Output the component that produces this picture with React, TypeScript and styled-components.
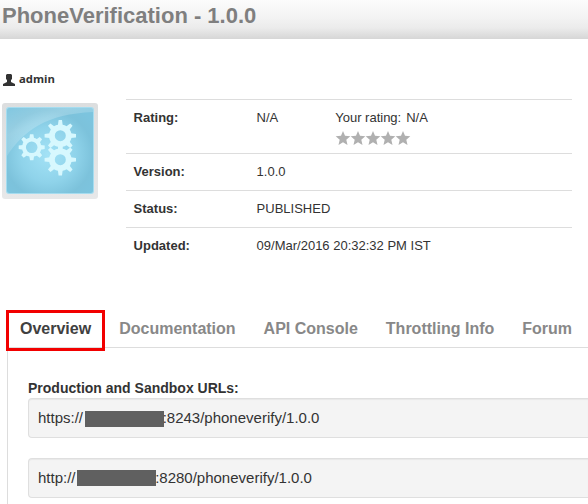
import React from 'react';
import styled, { createGlobalStyle } from 'styled-components';

const GlobalStyle = createGlobalStyle`
  * { box-sizing: border-box; }
  body {
    margin: 0;
    background: #fff;
    color: #333;
    font: 13px/20px "Liberation Sans", Arial, sans-serif;
    overflow: hidden;
  }
`;

const Page = styled.div`
  height: 504px;
  overflow: hidden;
  display: flex;
  flex-direction: column;
`;

const Header = styled.header`
  flex: none;
  height: 39px;
  padding-left: 2px;
  background: linear-gradient(#fcfcfc 0%, #f3f3f3 45%, #ebebeb 72%, #d6d6d6 100%);
`;

const Title = styled.h1`
  margin: 0;
  font-size: 22px;
  line-height: 31px;
  color: #7f7f7f;
`;

const Owner = styled.div`
  display: flex;
  align-items: center;
  gap: 4px;
  height: 20px;
  margin: 30px 0 10px 3px;
  font: bold 11.3px/20px "Open Sans", "Noto Sans", sans-serif;
`;

const OwnerIcon = styled.svg`
  width: 12px;
  height: 12px;
  margin-top: 1px;
`;

const Summary = styled.section`
  flex: none;
  display: flex;
  gap: 28px;
  height: 211px;
  padding: 0 16px 0 2px;
`;

const Thumbnail = styled.svg`
  flex: none;
  width: 96px;
  height: 96px;
  margin-top: 4px;
`;

const Details = styled.dl`
  flex: 1;
  margin: 0;
`;

const DetailRow = styled.div<{ $height?: number }>`
  display: flex;
  height: ${p => p.$height ?? 37}px;
  padding: 8px 8px 8px 7.6px;
  border-top: 1px solid #ddd;
`;

const Label = styled.dt`
  width: 123px;
  font-weight: bold;
`;

const Value = styled.dd`
  margin: 0;
`;

const RatingValue = styled(Value)`
  width: 78.6px;
`;

const RatingText = styled.div`
  display: flex;
  gap: 5px;
`;

const Stars = styled.svg`
  display: block;
  width: 77px;
  height: 15px;
  margin-top: 3px;
`;

const Tabs = styled.nav`
  flex: none;
  display: flex;
  gap: 28px;
  height: 37px;
  padding-left: 20px;
  font-size: 16px;
  font-weight: bold;
  line-height: 38px;
  white-space: nowrap;
`;

const Tab = styled.a<{ $active?: boolean }>`
  position: relative;
  color: ${p => (p.$active ? '#404040' : '#888')};
`;

const Highlight = styled.span`
  position: absolute;
  left: -14px;
  right: -14px;
  top: 0;
  height: 41px;
  border: 3px solid #f20000;
`;

const Panel = styled.main`
  flex: 1;
  margin-left: 7px;
  padding: 30px 0 0 20px;
  border: solid #ddd;
  border-width: 1px 0 0 1px;
`;

const PanelTitle = styled.h2`
  margin: 0;
  font-size: 14px;
  line-height: 20px;
`;

const UrlBox = styled.div`
  display: flex;
  align-items: center;
  height: 40px;
  margin-bottom: 20px;
  padding-left: 9px;
  border: 1px solid #dfdfdf;
  border-right: 0;
  border-radius: 4px 0 0 4px;
  background: #f4f4f4;
  box-shadow: inset 0 1px 1px rgba(0, 0, 0, 0.05);
  font-size: 15px;
`;

const Redaction = styled.span<{ $drop: number }>`
  width: 79px;
  height: 16px;
  margin: ${p => p.$drop}px -1px 0 1.6px;
  background: #606060;
`;

const tabs = ['Overview', 'Documentation', 'API Console', 'Throttling Info', 'Forum'];
const urls = [
  { scheme: 'https://', rest: ':8243/phoneverify/1.0.0', drop: 2 },
  { scheme: 'http://', rest: ':8280/phoneverify/1.0.0', drop: 0 },
];
const rows = [
  ['Version:', '1.0.0'],
  ['Status:', 'PUBLISHED'],
  ['Updated:', '09/Mar/2016 20:32:32 PM IST'],
];

function Gear({ x, y, r, body, hole }: { x: number; y: number; r: number; body: number; hole: number }) {
  return (
    <g transform={`translate(${x} ${y})`} fill="#d7f8fe">
      <circle r={(body + hole) / 2} fill="none" stroke="#d7f8fe" strokeWidth={body - hole} />
      {Array.from({ length: 8 }, (_, i) => (
        <path
          key={i}
          transform={`rotate(${i * 45})`}
          d={`M-2.400 ${1 - body}L-1.700 ${-r}H1.700L2.400 ${1 - body}Z`}
        />
      ))}
    </g>
  );
}

function ApiThumbnail() {
  return (
    <Thumbnail viewBox="0 0 96 96">
      <defs>
        <radialGradient id="glow" cx="0.48" cy="0.55" r="0.65">
          <stop offset="0" stopColor="#a3e2f6" />
          <stop offset="0.5" stopColor="#8fd3ea" />
          <stop offset="0.8" stopColor="#7cc2db" />
          <stop offset="1" stopColor="#7cc4de" />
        </radialGradient>
        <linearGradient id="gloss" x1="0" y1="0" x2="0.8" y2="1">
          <stop offset="0" stopColor="#fff" stopOpacity="0.05" />
          <stop offset="0.35" stopColor="#fff" stopOpacity="0.22" />
          <stop offset="1" stopColor="#fff" stopOpacity="0.03" />
        </linearGradient>
        <linearGradient id="frame" x1="0" y1="0" x2="0" y2="1">
          <stop offset="0" stopColor="#dcdedf" />
          <stop offset="1" stopColor="#e7e8e9" />
        </linearGradient>
      </defs>
      <rect width="96" height="96" rx="3" fill="url(#frame)" />
      <rect x="4" y="4" width="88" height="87" rx="3" fill="#a5dcef" />
      <rect x="5" y="5" width="86" height="85" rx="2.5" fill="url(#glow)" />
      <path d="M5 53C22 27 45 11 91 9V7Q91 5 88.500 5H7.500Q5 5 5 7Z" fill="url(#gloss)" />
      <Gear x={29.7} y={44.3} r={13} body={9.8} hole={5.8} />
      <Gear x={58.3} y={32.7} r={15.7} body={11.3} hole={5.5} />
      <Gear x={58.3} y={56.7} r={15.7} body={11.3} hole={5.5} />
    </Thumbnail>
  );
}

export default function App() {
  return (
    <>
      <GlobalStyle />
      <Page>
        <Header>
          <Title>PhoneVerification - 1.0.0</Title>
        </Header>
        <Owner>
          <OwnerIcon viewBox="0 0 12 12" fill="#333">
            <path d="M4 0H8L9 1V5L8 6V8L12 10V12H0V10L4 8V6L3 5V1Z" />
          </OwnerIcon>
          admin
        </Owner>
        <Summary>
          <ApiThumbnail />
          <Details>
            <DetailRow $height={54}>
              <Label>Rating:</Label>
              <RatingValue>N/A</RatingValue>
              <Value>
                <RatingText><span>Your rating:</span><span>N/A</span></RatingText>
                <Stars viewBox="0 0 77 15" fill="#b0b0b0">
                  {[0, 1, 2, 3, 4].map(i => (
                    <path key={i} transform={`translate(${i * 15 + 0.5} -0.500)`} d="M7.500 0.500L9.500 5.200L14.800 5.700L10.800 9.200L12 14.500L7.500 11.700L3 14.500L4.200 9.200L0.200 5.700L5.500 5.200Z" />
                  ))}
                </Stars>
              </Value>
            </DetailRow>
            {rows.map(([label, value]) => (
              <DetailRow key={label}>
                <Label>{label}</Label>
                <Value>{value}</Value>
              </DetailRow>
            ))}
          </Details>
        </Summary>
        <Tabs>
          {tabs.map((tab, i) => (
            <Tab key={tab} $active={i === 0}>
              {tab}
              {i === 0 && <Highlight />}
            </Tab>
          ))}
        </Tabs>
        <Panel>
          <PanelTitle>Production and Sandbox URLs:</PanelTitle>
          {urls.map(url => (
            <UrlBox key={url.scheme}>
              <span>{url.scheme}</span>
              <Redaction $drop={url.drop} />
              <span>{url.rest}</span>
            </UrlBox>
          ))}
        </Panel>
      </Page>
    </>
  );
}
